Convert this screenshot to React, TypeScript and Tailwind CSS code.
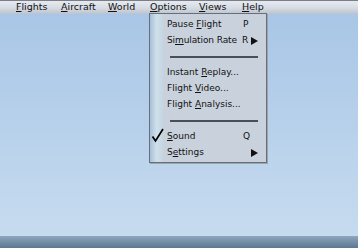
import React from "react";

const U = ({ c }: { c: string }) => <span className="underline underline-offset-[1px]">{c}</span>;

const Arrow = () => (
  <svg width="7" height="8" viewBox="0 0 7 8" className="block">
    <polygon points="0,0 7,4 0,8" fill="#111" />
  </svg>
);

const Row = ({ children, sc, arrow, check }: { children: React.ReactNode; sc?: string; arrow?: boolean; check?: boolean }) => (
  <div className="relative flex h-[16px] items-center whitespace-nowrap pl-[4px] pr-[8px]">
    {check && (
      <svg width="13" height="15" viewBox="0 0 13 15" className="absolute left-[-12px] top-[-1px]">
        <path d="M1.5 8.5 L4.5 13 L12 1" stroke="#000" strokeWidth="1.7" fill="none" />
      </svg>
    )}
    <div className="flex-1">{children}</div>
    {sc && <span className={arrow ? "w-[9px]" : "w-[15px]"}>{sc}</span>}
    {arrow && <Arrow />}
  </div>
);

const Sep = () => (
  <div className="flex h-[16px] items-center pl-[7px] pr-[8px]">
    <div className="h-[2px] w-full bg-[#4a4e56]" />
  </div>
);

export default function App() {
  return (
    <div
      className="relative flex h-[248px] w-[358px] flex-col overflow-hidden text-[9.5px] text-[#111]"
      style={{ fontFamily: '"DejaVu Sans", Verdana, sans-serif' }}
    >
      <div className="flex h-[14px] items-center border-t border-[#7a7e86] bg-gradient-to-b from-[#e6eaf0] via-[#d8dde5] to-[#bcc3cd] pl-[16px]">
        <span className="w-[45px]"><U c="F" />lights</span>
        <span className="w-[47px]"><U c="A" />ircraft</span>
        <span className="w-[42px]"><U c="W" />orld</span>
        <span className="w-[49px]"><U c="O" />ptions</span>
        <span className="w-[43px]"><U c="V" />iews</span>
        <span><U c="H" />elp</span>
      </div>
      <div className="flex-1 bg-gradient-to-b from-[#a9c6e6] to-[#c6dbef]" />
      <div className="h-[12px] bg-gradient-to-b from-[#8ea6be] to-[#5d7891]" />

      <div className="absolute left-[149px] top-[13px] flex w-[118px] border border-[#6a6e76] bg-[#c9d2dc] text-[9px] shadow-[1px_1px_0_#9aa4b0]">
        <div className="w-[13px] bg-gradient-to-r from-[#a6bfd8] via-[#cfe0ea] to-[#c4d6e2]" />
        <div className="flex-1 pt-[3px] pb-[1px]">
          <Row sc="P">Pause <U c="F" />light</Row>
          <Row sc="R" arrow><span className="tracking-[-0.1px]">Si<U c="m" />ulation Rate</span></Row>
          <Sep />
          <Row>Instant <U c="R" />eplay...</Row>
          <Row>Flight <U c="V" />ideo...</Row>
          <Row>Flight <U c="A" />nalysis...</Row>
          <Sep />
          <Row sc="Q" check><U c="S" />ound</Row>
          <Row arrow><span>S<U c="e" />ttings</span></Row>
        </div>
      </div>
    </div>
  );
}
